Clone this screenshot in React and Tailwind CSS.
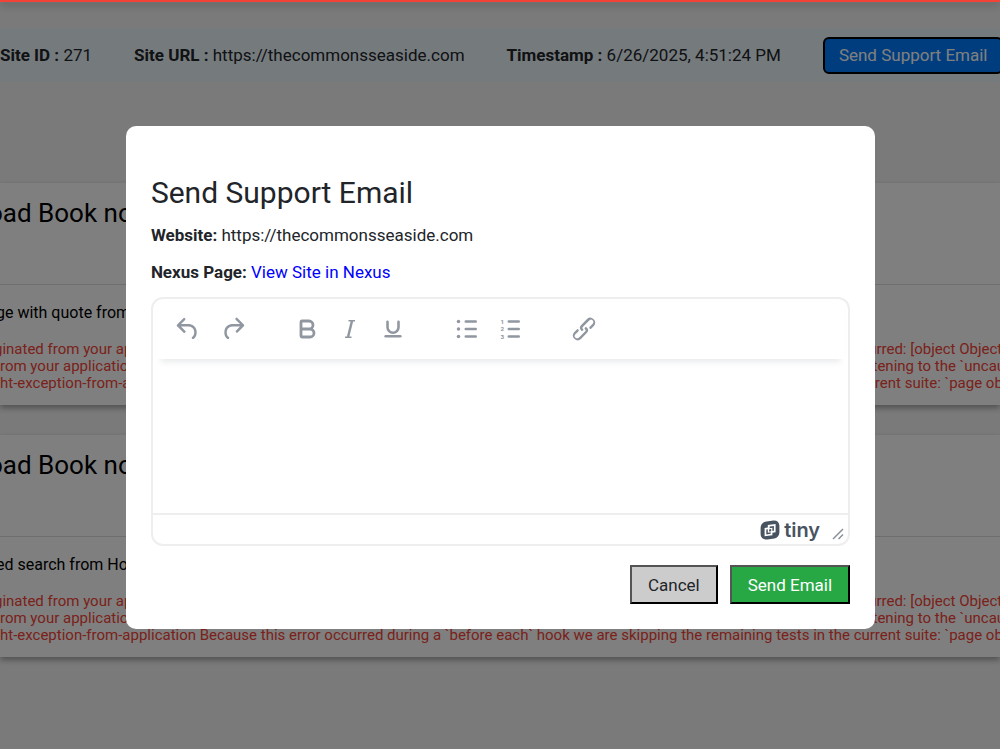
import React, { useState } from 'react';
import { Bold, Underline } from 'lucide-react';

const SITE_URL = 'https://thecommonsseaside.com';

const FAILURES = [
  { title: 'oad Book now', step: 'ge with quote from Home' },
  { title: 'oad Book now', step: 'ed search from Home' },
];

const ERROR_LINES = [
  'ginated from your application code, not from Cypress. It was caused by an unhandled rejected promise. > An unknown error has occurred: [object Object]',
  'rom your application it will automatically fail the current test. This behavior is configurable, and you can choose to turn this off by listening to the `uncaught:exception`',
  'ht-exception-from-application Because this error occurred during a `before each` hook we are skipping the remaining tests in the current suite: `page objects`',
];

function UndoIcon() {
  return (
    <svg width="30" height="30" viewBox="0 0 24 24" fill="currentColor">
      <path d="M6.4 8H12c3.7 0 6.2 2 6.8 5.1.6 2.7-.4 5.6-2.3 6.8a1 1 0 0 1-1-1.8c1.1-.6 1.8-2.7 1.4-4.6-.5-2.1-2.1-3.5-4.9-3.5H6.4l3.3 3.3a1 1 0 1 1-1.4 1.4l-5-5a1 1 0 0 1 0-1.4l5-5a1 1 0 0 1 1.4 1.4L6.4 8Z" />
    </svg>
  );
}

function RedoIcon() {
  return (
    <svg width="30" height="30" viewBox="0 0 24 24" fill="currentColor">
      <path d="M17.6 10H12c-2.8 0-4.4 1.4-4.9 3.5-.4 2 .3 4 1.4 4.6a1 1 0 1 1-1 1.8c-2-1.2-2.9-4.1-2.3-6.8.6-3 3-5.1 6.8-5.1h5.6l-3.3-3.3a1 1 0 1 1 1.4-1.4l5 5a1 1 0 0 1 0 1.4l-5 5a1 1 0 0 1-1.4-1.4l3.3-3.3Z" />
    </svg>
  );
}

function ItalicIcon() {
  return (
    <svg width="24" height="24" viewBox="0 0 24 24" fill="none" stroke="currentColor">
      <path d="M10.5 3.8h6.5M7 20.2h6.5" strokeWidth="1.4" />
      <path d="M14 4 10 20" strokeWidth="2.4" />
    </svg>
  );
}

function BulletListIcon() {
  return (
    <svg width="30" height="30" viewBox="0 0 24 24" fill="currentColor">
      <circle cx="5.2" cy="6" r="1.4" />
      <circle cx="5.2" cy="12" r="1.4" />
      <circle cx="5.2" cy="18" r="1.4" />
      <path d="M11 6h8M11 12h8M11 18h8" stroke="currentColor" strokeWidth="2" strokeLinecap="round" />
    </svg>
  );
}

function NumberListIcon() {
  return (
    <svg width="30" height="30" viewBox="0 0 24 24" fill="currentColor">
      <g fontFamily="Roboto, sans-serif" fontSize="5" fontWeight="700" textAnchor="middle">
        <text x="5.8" y="7.8">1</text>
        <text x="5.8" y="13.8">2</text>
        <text x="5.8" y="19.8">3</text>
      </g>
      <path d="M11 6h8M11 12h8M11 18h8" stroke="currentColor" strokeWidth="2" strokeLinecap="round" />
    </svg>
  );
}

function LinkIcon() {
  return (
    <svg width="30" height="30" viewBox="0 0 24 24" fill="currentColor">
      <path d="M6.2 12.3a1 1 0 0 1 1.4 1.4l-2 2a2 2 0 1 0 2.6 2.8l4.8-4.8a1 1 0 0 0 0-1.4 1 1 0 1 1 1.4-1.3 2.9 2.9 0 0 1 0 4L9.6 20a3.9 3.9 0 0 1-5.5-5.5l2-2Zm11.6-.6a1 1 0 0 1-1.4-1.4l2-2a2 2 0 1 0-2.6-2.8L11 10.3a1 1 0 0 0 0 1.4A1 1 0 1 1 9.6 13a2.9 2.9 0 0 1 0-4L14.4 4a3.9 3.9 0 0 1 5.5 5.5l-2 2Z" />
    </svg>
  );
}

function TinyMark() {
  return (
    <svg width="20" height="20" viewBox="0 0 20 20" fill="none">
      <path
        d="M6.5 1.4 13.5.5C17 .3 19.2 2.3 19.4 5.5v6.5c0 3.6-1.9 5.9-5 6.5l-7 1C3.6 19.8.8 17.9.6 14.2V8.2C.5 4.4 2.8 1.9 6.5 1.4Z"
        fill="#485361"
      />
      <path d="M7.8 5 15.6 3.900v8.400L12.400 12.800v2.400L4.600 16.300V8l3.200-.5Z" fill="#fff" />
      <path d="M9.600 6.600 13.900 6v4.800l-1.500.2V7.800l-2.800.4Z" fill="#485361" />
      <path d="M6.300 9.500 7.800 9.300v3.400l2.900-.4v1.500l-4.400.6Z" fill="#485361" />
      <path d="M9.100 9.400 11.200 9.100v2.100L9.100 11.500Z" fill="#485361" />
    </svg>
  );
}

function ToolButton({ label, children }) {
  return (
    <button type="button" aria-label={label} className="flex h-9 w-[43px] items-center justify-center">
      {children}
    </button>
  );
}

function Editor() {
  const [message, setMessage] = useState('');

  return (
    <div className="mt-[13px] overflow-hidden rounded-[12px] border-2 border-[#eeeeee] bg-white">
      <div className="mx-1 flex h-[60px] items-center pl-2.5 text-[#9097a0] shadow-[0_7px_6px_-4px_rgba(34,47,62,0.1)]">
        <div className="flex gap-0.5">
          <ToolButton label="Undo"><UndoIcon /></ToolButton>
          <ToolButton label="Redo"><RedoIcon /></ToolButton>
        </div>
        <div className="ml-[31px] flex">
          <ToolButton label="Bold"><Bold size={24} strokeWidth={2.8} /></ToolButton>
          <ToolButton label="Italic"><ItalicIcon /></ToolButton>
          <ToolButton label="Underline"><Underline size={22} strokeWidth={2.8} /></ToolButton>
        </div>
        <div className="ml-[31px] flex">
          <ToolButton label="Bullet list"><BulletListIcon /></ToolButton>
          <ToolButton label="Numbered list"><NumberListIcon /></ToolButton>
        </div>
        <div className="ml-[31px] flex">
          <ToolButton label="Insert link"><LinkIcon /></ToolButton>
        </div>
      </div>
      <textarea
        aria-label="Email message"
        className="block h-[154px] w-full resize-none bg-transparent px-4 py-4 outline-none"
        value={message}
        onChange={(e) => setMessage(e.target.value)}
      />
      <div className="flex h-[31px] items-center justify-end border-t-2 border-[#eeeeee] pr-1">
        <TinyMark />
        <span className="ml-1 font-['Inter',sans-serif] text-[20px] leading-6 font-semibold text-[#485361]">tiny</span>
        <svg className="mt-2 ml-3" width="12" height="12" viewBox="0 0 12 12" stroke="#8a919b" strokeWidth="1.5">
          <path d="M1 11 11 1M6.5 11 11 6.5" />
        </svg>
      </div>
    </div>
  );
}

function FailureCard({ title, step }) {
  return (
    <article className="h-[222px] overflow-hidden bg-white whitespace-nowrap text-black shadow-[0_3px_6px_rgba(0,0,0,0.35)]">
      <h2 className="-ml-3 h-[102px] border-b border-[#dddddd] pt-3 text-[26px] leading-9">{title}</h2>
      <p className="-ml-1 pt-4 text-[16px] leading-6">{step}</p>
      <div className="pt-4 text-[15px] leading-[17px] text-[#f44336]">
        {ERROR_LINES.map((line) => (
          <p key={line} className="first:-ml-1.5">{line}</p>
        ))}
      </div>
    </article>
  );
}

function App() {
  return (
    <div className="min-h-screen overflow-hidden bg-[#f5f5f5] font-['Roboto',sans-serif] text-[#212529]">
      <div className="h-[2px] bg-[#f44336] shadow-[0_2px_8px_rgba(0,0,0,0.5)]" />

      {/* Site details */}
      <header className="mt-[26px] flex h-[54px] items-center gap-[42px] bg-[#ebf4fb] text-[17px] leading-6 whitespace-nowrap">
        <p><b>Site ID :</b> 271</p>
        <p><b>Site URL :</b> {SITE_URL}</p>
        <p><b>Timestamp :</b> 6/26/2025, 4:51:24 PM</p>
        <button type="button" className="h-[37px] shrink-0 rounded-md border-2 border-black bg-[#007bff] px-3.5 text-white">
          Send Support Email
        </button>
      </header>

      {/* Failed tests */}
      <main className="mt-[101px] flex flex-col gap-[30px]">
        {FAILURES.map((failure) => (
          <FailureCard key={failure.step} {...failure} />
        ))}
      </main>

      {/* Support email dialog */}
      <div className="fixed inset-x-0 top-[2px] bottom-0 flex items-start justify-center bg-black/50 pt-[124px] pl-px">
        <section role="dialog" aria-labelledby="dialog-title" className="w-3/4 rounded-[10px] bg-white p-[25px] pt-[49px] text-[17px] leading-6">
          <h1 id="dialog-title" className="text-[30px] leading-9">Send Support Email</h1>
          <p className="mt-3"><b>Website:</b> {SITE_URL}</p>
          <p className="mt-[13px]">
            <b>Nexus Page:</b> <a href="#nexus" className="text-[#0000ff]">View Site in Nexus</a>
          </p>
          <Editor />
          <div className="mt-[19px] flex justify-end gap-3">
            <button type="button" className="h-[39px] border-2 border-black bg-[#cccccc] px-4 [border-style:outset]">
              Cancel
            </button>
            <button type="button" className="h-[39px] border-2 border-black bg-[#28a745] px-4 text-white [border-style:outset]">
              Send Email
            </button>
          </div>
        </section>
      </div>
    </div>
  );
}

export default App;
